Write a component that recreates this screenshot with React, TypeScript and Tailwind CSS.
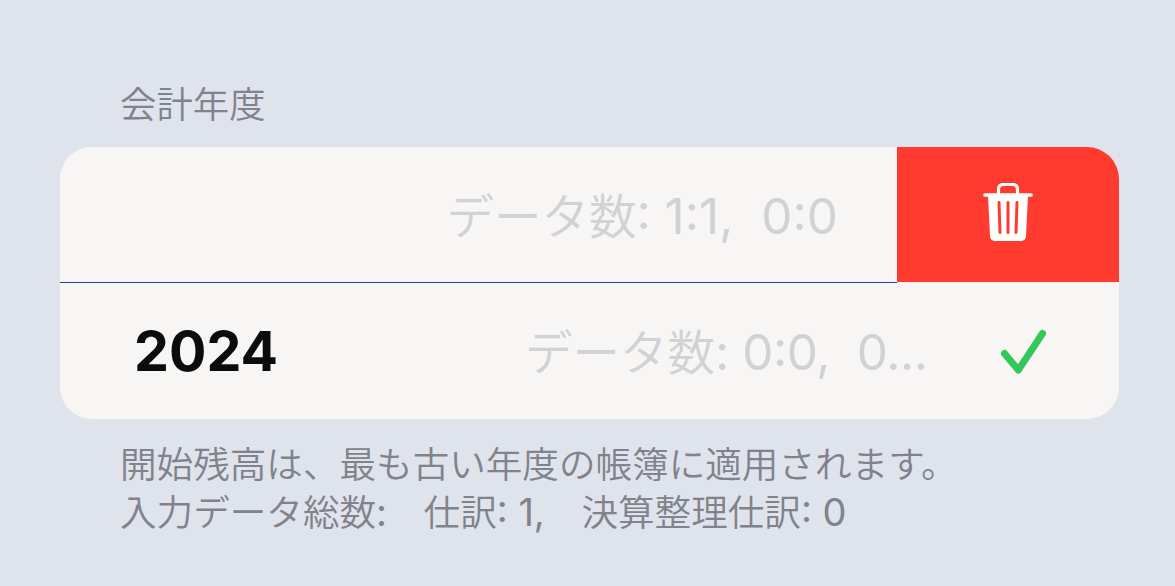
import type { ReactNode } from 'react';

function Kana({ children }: { children: ReactNode }) {
  return <span className="font-['Noto_Sans_CJK_JP'] font-[350]">{children}</span>;
}

function RatioColon() {
  return <span className="inline-block -translate-y-[4.5px]">:</span>;
}

function TrashIcon() {
  return (
    <svg width="50" height="59" viewBox="0 0 50 59" fill="none">
      <path d="M15.5 12V6.5Q15.5 1.5 20.5 1.5H29.5Q34.5 1.5 34.5 6.5V12" stroke="white" strokeWidth="3.2" />
      <path d="M2 12H48" stroke="white" strokeWidth="3.6" strokeLinecap="round" />
      <path d="M5 12H45L43 53Q42.700 58 37.500 58H12.500Q7.300 58 7 53Z" fill="white" />
      <path d="M16 19.500L17 49.500M25 19.500V49.500M34 19.500L33 49.500" stroke="#ff3b30" strokeWidth="3" strokeLinecap="round" />
    </svg>
  );
}

function CheckIcon() {
  return (
    <svg width="46" height="46" viewBox="0 0 46 46" fill="none">
      <path d="M4.500 24.500L18.300 41L42.500 4.500" stroke="#34c759" strokeWidth="7" strokeLinecap="round" strokeLinejoin="round" />
    </svg>
  );
}

export default function App() {
  return (
    <main className="h-[586px] w-[1175px] overflow-hidden bg-[#dfe3eb] pl-[60px] pr-14 font-['Inter','Noto_Sans_CJK_JP',sans-serif]">
      <h2 className="h-[147px] pl-[60px] pt-[78px] text-[36.400px] leading-[48px] text-[#80838b]">
        <Kana>会計年度</Kana>
      </h2>

      <section className="h-[272px] overflow-hidden rounded-[32px] bg-[#f7f6f4]">
        <div className="flex h-[136px]">
          <div className="flex h-[136px] w-[837px] justify-end border-b border-[#23468f] pr-[59px] pt-[35px] text-[49.500px] leading-[64px] text-[#d1d1d6]">
            <p className="whitespace-pre">
              <span className="text-[47.500px]"><Kana>データ数</Kana></span>
              <span>: 1<RatioColon />1,  0<RatioColon />0</span>
            </p>
          </div>
          <button className="flex h-[136px] flex-1 items-start justify-center border-b border-[#e6e6e9] bg-[#ff3b30] pt-9" aria-label="削除">
            <TrashIcon />
          </button>
        </div>
        <div className="flex h-[136px] text-[49.500px] leading-[64px] text-[#d1d1d6]">
          <strong className="w-[391px] pl-[74px] pt-[36px] text-[55.500px] font-bold text-[#0c0c0c]">2024</strong>
          <p className="w-[549px] whitespace-pre pl-[74px] pt-[35px]">
            <span className="text-[47.500px]"><Kana>データ数</Kana></span>
            <span className="tracking-[-0.5px]">: 0<RatioColon />0,  0...</span>
          </p>
          <div className="pt-[46px]">
            <CheckIcon />
          </div>
        </div>
      </section>

      <footer className="whitespace-pre pl-[60px] pt-[20px] text-[36.600px] leading-[48px] text-[#80838b]">
        <p className="h-12"><Kana>開始残高は、最も古い年度の帳簿に適用されます。</Kana></p>
        <p className="h-12">
          <Kana>入力データ総数</Kana>
          <span className="text-[38px]">:</span>
          <Kana>　仕訳</Kana>
          <span className="text-[38px]">: 1,</span>
          <Kana>　決算整理仕訳</Kana>
          <span className="text-[38px]">: 0</span>
        </p>
      </footer>
    </main>
  );
}
